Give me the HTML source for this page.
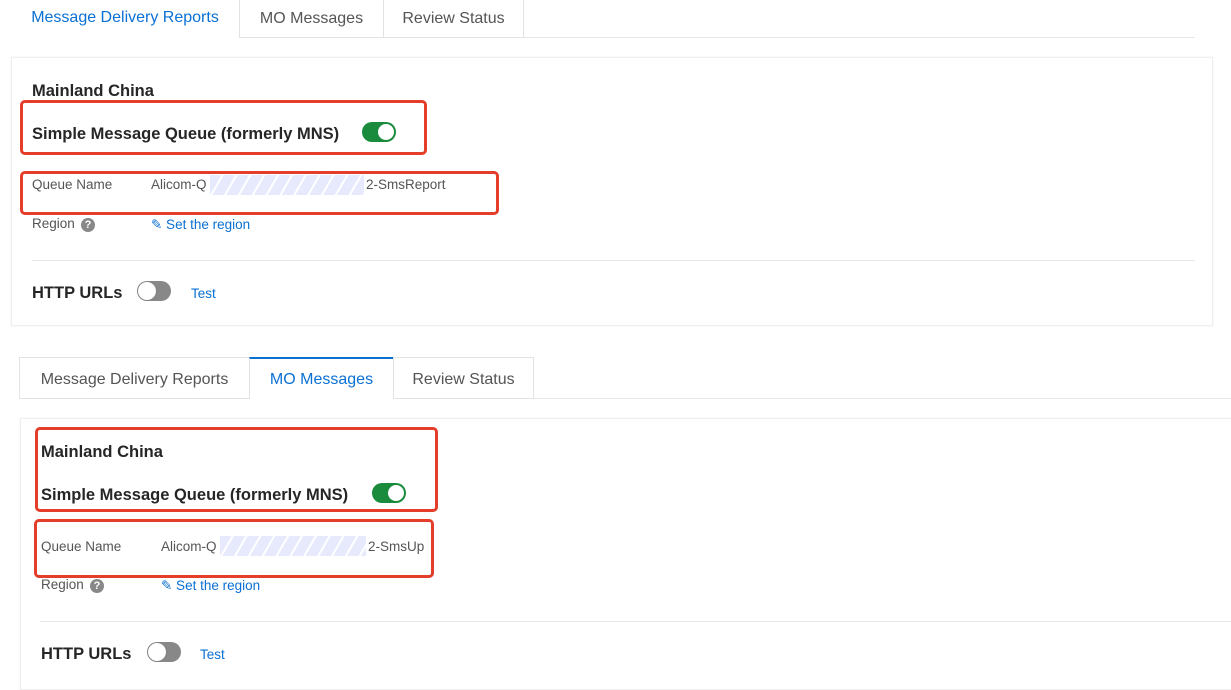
<!DOCTYPE html>
<html><head><meta charset="utf-8"><style>
body{margin:0;width:1231px;height:685px;background:#fff;position:relative;overflow:hidden;font-family:"Liberation Sans",sans-serif;}
.a{position:absolute;white-space:nowrap;}
.tab{position:absolute;box-sizing:border-box;border:1px solid #e3e3e3;background:#fff;color:#555;font-size:16px;text-align:center;}
.act{background:#fff;color:#0a70d4;border-bottom-color:#fff;}
.card{position:absolute;border:1px solid #efefef;box-shadow:0 0 3px rgba(0,0,0,.05);background:#fff;}
.h{font-weight:bold;font-size:16.5px;color:#262626;}
.lab{font-size:13.5px;color:#555;}
.blue{color:#0a70d4;font-size:13.5px;}
.red{position:absolute;border:3px solid #e43d2a;border-radius:5px;box-sizing:border-box;}
.on{position:absolute;width:34px;height:20px;border-radius:10px;background:#1a8a3c;}
.on::after{content:"";position:absolute;right:2px;top:2px;width:16px;height:16px;border-radius:50%;background:#fff;}
.off{position:absolute;width:34px;height:20px;border-radius:10px;background:#888;}
.off::after{content:"";position:absolute;left:1px;top:1px;width:18px;height:18px;border-radius:50%;background:#fff;box-shadow:0 0 1px #666;}
.hatch{position:absolute;height:20px;background:repeating-linear-gradient(120deg,#e6eafc 0 10px,#fff 10px 12px);}
.q{position:absolute;width:14px;height:14px;border-radius:50%;background:#888;color:#fff;font-size:11px;font-weight:bold;text-align:center;line-height:14px;}
.line{position:absolute;height:1px;background:#e6e6e6;}
</style></head><body>
<!-- top -->
<div class="line" style="left:523px;top:37px;width:672px"></div>
<div class="tab act" style="left:10px;top:0;width:230px;height:38px;line-height:36px;border:none;">Message Delivery Reports</div>
<div class="tab" style="left:239px;top:-1px;width:145px;height:39px;line-height:37px">MO Messages</div>
<div class="tab" style="left:383px;top:-1px;width:141px;height:39px;line-height:37px">Review Status</div>
<div class="card" style="left:11px;top:57px;width:1200px;height:267px"></div>
<div class="a h" style="left:32px;top:82px">Mainland China</div>
<div class="a h" style="left:32px;top:125px">Simple Message Queue (formerly MNS)</div>
<div class="on" style="left:362px;top:122px"></div>
<div class="a lab" style="left:32px;top:177px">Queue Name</div>
<div class="a lab" style="left:151px;top:177px">Alicom-Q</div>
<div class="hatch" style="left:210px;top:175px;width:154px"></div>
<div class="a lab" style="left:366px;top:177px">2-SmsReport</div>
<div class="a lab" style="left:32px;top:216px">Region</div>
<div class="q" style="left:81px;top:218px">?</div>
<div class="a blue" style="left:151px;top:217px">✎ Set the region</div>
<div class="line" style="left:32px;top:260px;width:1163px"></div>
<div class="a h" style="left:32px;top:284px">HTTP URLs</div>
<div class="off" style="left:137px;top:281px"></div>
<div class="a blue" style="left:191px;top:286px">Test</div>
<div class="red" style="left:20px;top:100px;width:407px;height:55px"></div>
<div class="red" style="left:20px;top:171px;width:479px;height:44px"></div>
<!-- bottom -->
<div class="line" style="left:533px;top:398px;width:698px"></div>
<div class="tab" style="left:19px;top:357px;width:231px;height:42px;line-height:44px">Message Delivery Reports</div>
<div class="tab act" style="left:249px;top:357px;width:145px;height:42px;line-height:42px;border-top:2px solid #0a70d4;border-bottom:none">MO Messages</div>
<div class="tab" style="left:393px;top:357px;width:141px;height:42px;line-height:44px">Review Status</div>
<div class="card" style="left:20px;top:418px;width:1215px;height:270px"></div>
<div class="a h" style="left:41px;top:443px">Mainland China</div>
<div class="a h" style="left:41px;top:486px">Simple Message Queue (formerly MNS)</div>
<div class="on" style="left:372px;top:483px"></div>
<div class="a lab" style="left:41px;top:539px">Queue Name</div>
<div class="a lab" style="left:161px;top:539px">Alicom-Q</div>
<div class="hatch" style="left:220px;top:536px;width:146px"></div>
<div class="a lab" style="left:368px;top:539px;width:63px;overflow:hidden">2-SmsUp</div>
<div class="a lab" style="left:41px;top:577px">Region</div>
<div class="q" style="left:90px;top:579px">?</div>
<div class="a blue" style="left:161px;top:578px">✎ Set the region</div>
<div class="line" style="left:40px;top:621px;width:1191px"></div>
<div class="a h" style="left:41px;top:645px">HTTP URLs</div>
<div class="off" style="left:147px;top:642px"></div>
<div class="a blue" style="left:200px;top:647px">Test</div>
<div class="red" style="left:35px;top:427px;width:403px;height:85px"></div>
<div class="red" style="left:34px;top:519px;width:400px;height:59px"></div>
</body></html>
